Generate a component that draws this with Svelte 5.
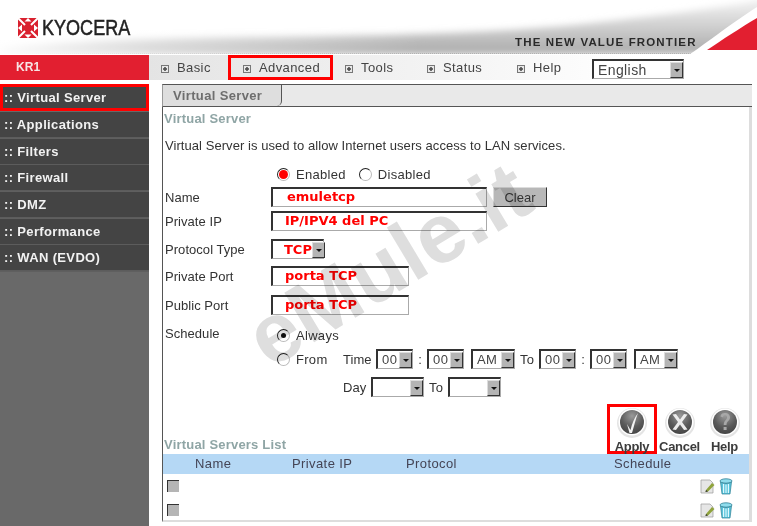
<script>
	const tabs = ['Basic', 'Advanced', 'Tools', 'Status', 'Help'];
	const menu = ['Virtual Server', 'Applications', 'Filters', 'Firewall', 'DMZ', 'Performance', 'WAN (EVDO)'];
	const columns = ['', 'Name', 'Private IP', 'Protocol', 'Schedule', ''];
</script>

{#snippet select(value, cls)}
	<span class="sel {cls}">
		<span class="sel-value">{value}</span>
		<span class="sel-arrow"></span>
	</span>
{/snippet}

{#snippet ball(glyph)}
	<svg class="ball" viewBox="0 0 32 32" width="32" height="32">
		<circle cx="16" cy="16" r="15" fill="#e4e4e4" />
		<circle cx="16" cy="15" r="13.5" fill="#fff" />
		<circle cx="16" cy="15" r="12" fill="url(#ballFill)" />
		{#if glyph === 'check'}
			<path d="M11 17 L14.5 23 C16 17 18 11 22 6 C20 11 18 19 16 26 L13.5 26 Z" fill="#f2f2f2" />
		{:else if glyph === 'x'}
			<path d="M8.5 7.5 L12 7 L16 12.5 L20 7 L23.5 7.5 L18 15 L23.5 22.5 L20 23 L16 17.5 L12 23 L8.5 22.5 L14 15 Z" fill="#ececec" />
		{:else}
			<path d="M11.5 9.5 C12 6.5 14 6 16 6 C19 6 21 8 21 10.5 C21 13.5 17.5 14 17.5 18 L14.7 18 C14.7 13.5 18 13 18 10.5 C18 9 17 8.2 16 8.2 C15 8.2 14.2 9 14.2 10.5 Z M14.6 20 H17.6 V23 H14.6 Z" fill="#a8a8a8" />
		{/if}
	</svg>
{/snippet}

{#snippet rowIcons()}
	<span class="row-icons">
		<svg viewBox="0 0 15 16" width="15" height="16">
			<path d="M1 2 H10 L13 5 V15 H1 Z" fill="#e6e6e6" stroke="#999" stroke-width="0.7" />
			<path d="M6 12 L12 5 L14.5 7 L8 13.5 L5.5 14 Z" fill="#8fa33c" />
			<path d="M5.5 14 L6 12 L8 13.5 Z" fill="#333" />
		</svg>
		<svg viewBox="0 0 14 17" width="14" height="17">
			<ellipse cx="7" cy="3" rx="6" ry="2.2" fill="#8fdcec" stroke="#2c7f94" stroke-width="0.8" />
			<path d="M1.5 4 L3 16 H11 L12.5 4 C10 6 4 6 1.5 4 Z" fill="#5cc4dc" stroke="#2c7f94" stroke-width="0.7" />
			<path d="M4.6 6 V15 M7 6.5 V15 M9.4 6 V15" stroke="#e6fbff" stroke-width="1.1" />
		</svg>
	</span>
{/snippet}

<div class="page">
	<header class="header">
		<svg class="swoosh" viewBox="0 0 757 54" width="757" height="54">
			<defs>
				<linearGradient id="greyFill" x1="0" y1="0" x2="0" y2="54" gradientUnits="userSpaceOnUse">
					<stop offset="0.1" stop-color="#ececec" />
					<stop offset="1" stop-color="#a9a9a9" />
				</linearGradient>
				<linearGradient id="leftFade" x1="0" y1="0" x2="420" y2="0" gradientUnits="userSpaceOnUse">
					<stop offset="0" stop-color="#fff" stop-opacity="0.95" />
					<stop offset="0.35" stop-color="#fff" stop-opacity="0.55" />
					<stop offset="1" stop-color="#fff" stop-opacity="0" />
				</linearGradient>
				<radialGradient id="ballFill" cx="0.5" cy="0.25" r="0.85">
					<stop offset="0" stop-color="#9a9a9a" />
					<stop offset="0.55" stop-color="#5a5a5a" />
					<stop offset="1" stop-color="#3e3e3e" />
				</radialGradient>
				<filter id="soft" x="-5%" y="-30%" width="110%" height="160%">
					<feGaussianBlur stdDeviation="3.5" />
				</filter>
			</defs>
			<path d="M0 48 C160 30 420 44 600 22 C670 14 720 8 770 -2 V54 H0 Z" fill="url(#greyFill)" filter="url(#soft)" />
			<rect width="757" height="54" fill="url(#leftFade)" />
			<path d="M690 54 C700 48 730 24 757 7 V54 Z" fill="#fff" />
			<path d="M707 50 C722 40 740 28 757 18 V50 Z" fill="#e21f30" />
		</svg>
		<div class="logo">
			<svg viewBox="0 0 20 20" width="20" height="20">
				<rect width="20" height="20" fill="#d9202e" />
				<path d="M0 0 L7 7 M20 0 L13 7 M0 20 L7 13 M20 20 L13 13" stroke="#fff" stroke-width="2" />
				<path d="M0 10 L4 6.5 V13.5 Z M20 10 L16 6.5 V13.5 Z M10 0 L6.5 3.5 H13.5 Z M10 20 L6.5 16.5 H13.5 Z" fill="#fff" />
			</svg>
			<span class="logo-text">KYOCERA</span>
		</div>
		<div class="tagline">THE NEW VALUE FRONTIER</div>
	</header>

	<nav class="nav">
		<div class="unit">KR1</div>
		<div class="tabs">
			{#each tabs as tab}
				<div class="tab" class:marked={tab === 'Advanced'}>
					<span class="tab-icon"></span>{tab}
				</div>
			{/each}
			{@render select('English', 'lang')}
		</div>
	</nav>

	<div class="body">
		<aside class="side">
			{#each menu as item, i}
				<div class="side-item" class:marked={i === 0}>:: {item}</div>
			{/each}
		</aside>

		<main class="main">
			<div class="tabstrip">
				<div class="tabstrip-tab">Virtual Server</div>
			</div>
			<div class="panel">
				<h2 class="title">Virtual Server</h2>
				<p class="desc">Virtual Server is used to allow Internet users access to LAN services.</p>

				<div class="row r-enabled">
					<span class="label"></span>
					<span class="radio red"></span><span class="opt">Enabled</span>
					<span class="radio second"></span><span class="opt">Disabled</span>
				</div>
				<div class="row r-name">
					<span class="label">Name</span>
					<input class="field wide name" value="emuletcp" />
					<button class="clear">Clear</button>
				</div>
				<div class="row r-ip">
					<span class="label">Private IP</span>
					<input class="field wide" value="IP/IPV4 del PC" />
				</div>
				<div class="row r-proto">
					<span class="label">Protocol Type</span>
					{@render select('TCP', 'proto')}
				</div>
				<div class="row r-priv">
					<span class="label">Private Port</span>
					<input class="field short" value="porta TCP" />
				</div>
				<div class="row r-pub">
					<span class="label">Public Port</span>
					<input class="field short" value="porta TCP" />
				</div>
				<div class="row r-always">
					<span class="label up">Schedule</span>
					<span class="radio on"></span><span class="opt">Always</span>
				</div>
				<div class="row r-from">
					<span class="label"></span>
					<span class="radio"></span><span class="opt from">From</span>
					<span class="w-time">Time</span>
					{@render select('00', 'hh')}
					<span class="w-colon">:</span>
					{@render select('00', 'hh')}
					<span class="w-7"></span>
					{@render select('AM', 'ap')}
					<span class="w-to">To</span>
					{@render select('00', 'hh')}
					<span class="w-colon">:</span>
					{@render select('00', 'hh')}
					<span class="w-7"></span>
					{@render select('AM', 'ap')}
				</div>
				<div class="row r-day">
					<span class="label"></span>
					<span class="day-pad"></span>
					<span class="w-day">Day</span>
					{@render select('', 'dd')}
					<span class="w-to">To</span>
					{@render select('', 'dd')}
				</div>

				<div class="actions">
					<h2 class="title list">Virtual Servers List</h2>
					<div class="buttons">
						<div class="action marked">{@render ball('check')}<span>Apply</span></div>
						<div class="action">{@render ball('x')}<span>Cancel</span></div>
						<div class="action">{@render ball('q')}<span>Help</span></div>
					</div>
				</div>

				<div class="table">
					<div class="thead">
						{#each columns as col}<span>{col}</span>{/each}
					</div>
					{#each [0, 1] as row (row)}
						<div class="tr">
							<span class="check"></span>
							<span></span><span></span><span></span><span></span>
							{@render rowIcons()}
						</div>
					{/each}
				</div>
			</div>
		</main>
	</div>

	<div class="watermark">eMule.it</div>
</div>

<style>
	:global(body) {
		margin: 0;
		background: #fff;
	}

	.page {
		position: relative;
		width: 757px;
		height: 526px;
		overflow: hidden;
		background: #fff;
		font-family: "Liberation Sans", Arial, sans-serif;
		font-size: 13px;
		letter-spacing: 0.05px;
		color: #333;
	}

	/* header */
	.header {
		position: relative;
		height: 54px;
		border-bottom: 1px dotted #b5b5b5;
		box-sizing: border-box;
	}

	.swoosh {
		position: absolute;
		left: 0;
		top: 0;
	}

	.logo {
		position: relative;
		display: flex;
		align-items: center;
		padding: 17px 0 0 18px;
		gap: 4px;
	}

	.logo-text {
		display: inline-block;
		font-size: 22px;
		line-height: 22px;
		color: #222;
		-webkit-text-stroke: 0.5px #222;
		transform: scaleX(0.82);
		transform-origin: left center;
		letter-spacing: 0;
	}

	.tagline {
		position: absolute;
		left: 515px;
		top: 36px;
		font-size: 11.5px;
		font-weight: bold;
		letter-spacing: 1.15px;
		color: #2a2a2a;
		white-space: nowrap;
	}

	/* top nav */
	.nav {
		display: flex;
		height: 26px;
		margin-top: 1px;
	}

	.unit {
		width: 149px;
		height: 25px;
		background: #e21f30;
		color: #f6e4e4;
		font-weight: bold;
		font-size: 12px;
		line-height: 25px;
		padding-left: 16px;
		box-sizing: border-box;
	}

	.tabs {
		flex: 1;
		display: grid;
		grid-template-columns: 79px 105px 82px 90px 87px auto;
		height: 25px;
		background: linear-gradient(to right, #e4e4e4, #f6f6f6 55%, #fff 80%);
	}

	.tab {
		display: flex;
		align-items: center;
		height: 25px;
		box-sizing: border-box;
		padding-left: 12px;
		gap: 8px;
		white-space: nowrap;
		letter-spacing: 0.4px;
		color: #444;
	}

	.tab.marked {
		border: 3px solid #f00;
		padding-left: 12px;
		gap: 8px;
	}

	.tab-icon {
		width: 6px;
		height: 6px;
		border: 1px solid #777;
		box-sizing: content-box;
		background: radial-gradient(circle, #555 0 1.5px, #e8e8e8 2px);
		flex: none;
		margin-top: 2px;
	}

	.tabs :global(.lang) {
		align-self: center;
		margin-top: 3px;
	}

	/* selects */
	.sel {
		display: inline-flex;
		align-items: center;
		justify-content: space-between;
		box-sizing: border-box;
		height: 20px;
		flex: none;
		background: #fff;
		border-style: solid;
		border-width: 2px 1px 1px 2px;
		border-color: #333 #aaa #aaa #333;
		padding-left: 4px;
		color: #444;
		letter-spacing: 0.4px;
	}

	.sel-value {
		white-space: nowrap;
	}

	.sel-arrow {
		position: relative;
		width: 13px;
		height: 16px;
		flex: none;
		background: #b4b4b4;
		box-sizing: border-box;
		border-right: 1px solid #333;
		border-bottom: 1px solid #333;
		border-top: 1px solid #ddd;
		border-left: 1px solid #ddd;
	}

	.sel-arrow::after {
		content: "";
		position: absolute;
		left: 3px;
		top: 6px;
		border-style: solid;
		border-width: 3px 3px 0;
		border-color: #111 transparent transparent;
	}

	.lang {
		width: 92px;
		font-size: 14px;
	}

	.proto {
		width: 53px;
		padding-left: 11px;
	}

	.proto .sel-value {
		color: #f00;
		font-family: "DejaVu Sans", sans-serif;
		font-weight: bold;
		font-size: 13px;
		letter-spacing: 0;
	}

	.hh {
		width: 37px;
	}

	.ap {
		width: 44px;
	}

	.dd {
		width: 53px;
	}

	/* sidebar */
	.body {
		display: flex;
		height: 445px;
	}

	.side {
		width: 149px;
		margin-top: 3px;
		background: #696969;
		flex: none;
	}

	.side-item {
		height: 25px;
		margin-bottom: 1.7px;
		background: #444;
		color: #f2f2f2;
		font-weight: bold;
		font-size: 13px;
		line-height: 25px;
		padding-left: 4px;
		letter-spacing: 0.35px;
		box-shadow: 0 1.7px 0 #5c5c5c;
	}

	.side-item.marked {
		height: 27px;
		margin-bottom: 1px;
		line-height: 21px;
		border: 3px solid #f00;
		box-sizing: border-box;
		padding-left: 1px;
		box-shadow: none;
	}

	/* main */
	.main {
		width: 590px;
		margin: 3px 0 0 13px;
	}

	.tabstrip {
		height: 23px;
		box-sizing: border-box;
		border-top: 1px solid #555;
		border-bottom: 1px solid #555;
		border-left: 1px solid #999;
		background: #e9e9e9;
	}

	.tabstrip-tab {
		width: 119px;
		height: 21px;
		box-sizing: border-box;
		border-right: 1px solid #555;
		border-bottom-right-radius: 5px;
		background: #dedede;
		font-weight: bold;
		color: #6e6e6e;
		line-height: 21px;
		padding-left: 10px;
		letter-spacing: 0.35px;
	}

	.panel {
		height: 415px;
		box-sizing: border-box;
		border-left: 1px solid #555;
		border-right: 3px solid #ddd;
		border-bottom: 2px solid #ddd;
	}

	.title {
		margin: 0;
		height: 24px;
		line-height: 24px;
		padding-left: 1px;
		font-size: 13px;
		font-weight: bold;
		color: #8fa5a5;
		letter-spacing: 0.2px;
	}

	.desc {
		margin: 0;
		height: 30px;
		line-height: 30px;
		padding-left: 2px;
		letter-spacing: 0.06px;
	}

	.row {
		display: flex;
		align-items: center;
		height: 20px;
		padding-left: 2px;
		white-space: nowrap;
	}

	.r-enabled { margin-top: 3px; }
	.r-name { margin-top: 3px; }
	.r-ip { margin-top: 4px; }
	.r-proto { margin-top: 8px; }
	.r-priv { margin-top: 7px; }
	.r-pub { margin-top: 9px; }
	.r-always { margin-top: 10px; }
	.r-from { margin-top: 4px; }
	.r-day { margin-top: 8px; }

	.label {
		width: 106px;
		flex: none;
	}

	.label.up {
		margin-top: -4px;
	}

	.radio {
		position: relative;
		width: 11px;
		height: 11px;
		margin-left: 6px;
		flex: none;
		border-radius: 50%;
		box-sizing: content-box;
		border: 1px solid #bbb;
		border-top-color: #222;
		border-left-color: #222;
		background: #fff;
	}

	.radio.second {
		margin-left: 13px;
	}

	.radio.red::after,
	.radio.on::after {
		content: "";
		position: absolute;
		border-radius: 50%;
	}

	.radio.red::after {
		inset: 1px;
		background: #f00;
	}

	.radio.on::after {
		inset: 3px;
		background: #111;
	}

	.opt {
		margin-left: 6px;
		letter-spacing: 0.3px;
	}

	.opt.from {
		width: 47px;
		flex: none;
	}

	.w-time {
		width: 33px;
		flex: none;
	}

	.w-colon {
		width: 14px;
		flex: none;
		text-align: center;
	}

	.w-7 {
		width: 7px;
		flex: none;
	}

	.w-to {
		width: 24px;
		flex: none;
		text-align: center;
	}

	.day-pad {
		width: 72px;
		flex: none;
	}

	.w-day {
		width: 28px;
		flex: none;
	}

	.field {
		box-sizing: border-box;
		height: 20px;
		flex: none;
		padding: 0 0 2px 12px;
		border-style: solid;
		border-width: 2px 1px 1px 2px;
		border-color: #333 #aaa #aaa #333;
		background: transparent;
		color: #f00;
		font-family: "DejaVu Sans", sans-serif;
		font-weight: bold;
		font-size: 13px;
		outline: none;
	}

	.field.name {
		padding-left: 14px;
	}

	.wide {
		width: 216px;
	}

	.short {
		width: 138px;
	}

	.clear {
		width: 54px;
		height: 20px;
		margin-left: 6px;
		padding: 0;
		background: #b8b8b8;
		border-style: solid;
		border-width: 1px;
		border-color: #ddd #333 #333 #ddd;
		font-family: inherit;
		font-size: 13px;
		color: #333;
	}

	/* action buttons */
	.actions {
		display: flex;
		justify-content: space-between;
		align-items: flex-end;
		height: 50px;
		margin-top: 7px;
	}

	.title.list {
		height: 18px;
		line-height: 18px;
		margin-bottom: 0;
	}

	.buttons {
		display: flex;
		margin-right: 2px;
	}

	.action {
		display: flex;
		flex-direction: column;
		align-items: center;
		width: 45px;
		height: 50px;
		box-sizing: border-box;
		padding-top: 0;
		font-weight: bold;
		font-size: 13px;
		color: #3c3c3c;
		letter-spacing: -0.3px;
		line-height: 15px;
	}

	.action.marked {
		width: 50px;
		border: 3px solid #f00;
	}

	.action:not(.marked) {
		padding-top: 3px;
	}

	.ball {
		flex: none;
	}

	/* list table */
	.thead,
	.tr {
		display: grid;
		grid-template-columns: 32px 97px 114px 208px 86px 1fr;
		align-items: center;
	}

	.thead {
		height: 20px;
		background: #b5d8f5;
		color: #445;
		letter-spacing: 0.4px;
		line-height: 20px;
	}

	.tr {
		height: 24px;
	}

	.check {
		width: 12px;
		height: 12px;
		margin-left: 4px;
		background: #b5b5b5;
		border-top: 1px solid #333;
		border-left: 1px solid #333;
		box-sizing: border-box;
	}

	.row-icons {
		display: flex;
		align-items: center;
		gap: 4px;
	}

	/* sits over the whole shot, like the stamp on the original */
	.watermark {
		position: absolute;
		left: 232px;
		top: 222px;
		font-size: 84px;
		font-weight: bold;
		line-height: 84px;
		letter-spacing: 0;
		color: #dedede;
		mix-blend-mode: multiply;
		transform: rotate(-31deg);
		white-space: nowrap;
		pointer-events: none;
	}
</style>
